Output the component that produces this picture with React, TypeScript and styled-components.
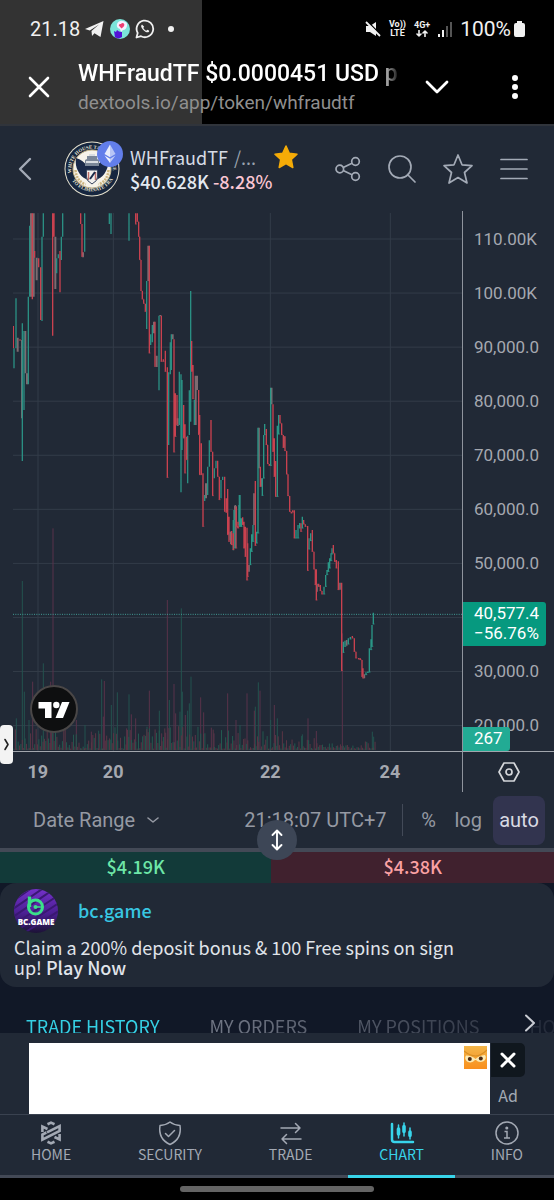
import React from "react";
import styled, { createGlobalStyle, css } from "styled-components";

const sans = `"Noto Sans CJK SC", "Noto Sans", sans-serif`;
const roboto = `Roboto, "Liberation Sans", sans-serif`;

const Global = createGlobalStyle`
  * { box-sizing: border-box; }
  body { margin: 0; background: #000; font-family: ${sans}; color: #d5d9e0; }
  button { border: 0; padding: 0; margin: 0; background: none; color: inherit; font: inherit; cursor: pointer; }
  a { color: inherit; text-decoration: none; }
  svg { display: block; flex: none; }
`;

const Page = styled.div`
  display: flex;
  flex-direction: column;
  min-height: 100vh;
  overflow: hidden;
`;

/* ---------- Phone status bar and in-app browser bar ---------- */

const BrowserTop = styled.header`
  background: linear-gradient(90deg, #333 0 36.5%, #000 36.5%);
  border-bottom: 2px solid #30343b;
  font-family: ${roboto};
  color: #fff;
`;

const StatusBar = styled.div`
  display: flex;
  align-items: center;
  justify-content: space-between;
  height: 58px;
  padding: 0 29px 0 30px;
  color: #f1f1f1;
  font-size: 20px;
`;

const StatusGroup = styled.div<{ $gap: number }>`
  display: flex;
  align-items: center;
  gap: ${(p) => p.$gap}px;
`;

const BatteryText = styled.span`
  font-size: 21px;
`;

const NetLabel = styled.span`
  display: flex;
  flex-direction: column;
  align-items: center;
  font-size: 9px;
  line-height: 9px;
  font-weight: 700;
`;

const AddressBar = styled.div`
  display: flex;
  align-items: center;
  height: 66px;
  padding: 0 26px 8px 28px;
`;

const AddressText = styled.div`
  flex: 1;
  min-width: 0;
  margin: 0 28px;
`;

const PageTitle = styled.div`
  overflow: hidden;
  white-space: nowrap;
  font-size: 23px;
  line-height: 30px;
  font-weight: 500;
  max-width: 320px;
  mask-image: linear-gradient(90deg, #000 302px, transparent 322px);
`;

const PageUrl = styled.div`
  font-size: 19px;
  line-height: 27px;
  color: #8f8f8f;
`;

const BarButtons = styled.div`
  display: flex;
  align-items: center;
  gap: 53px;
`;

/* ---------- Token header ---------- */

const TokenHeader = styled.section`
  display: flex;
  align-items: center;
  height: 85px;
  padding: 0 26px 0 15px;
  background: #212936;
`;

const BackButton = styled.button`
  color: #a3aab6;
`;

const TokenLogo = styled.div`
  position: relative;
  margin-left: 29px;
`;

const ChainBadge = styled.span`
  position: absolute;
  top: 0;
  right: -3px;
`;

const TokenInfo = styled.div`
  margin-left: 10px;
  flex: 1;
  white-space: nowrap;
`;

const TokenName = styled.div`
  display: flex;
  align-items: center;
  gap: 6px;
  font-size: 18px;
  line-height: 24px;
  color: #d5dbe5;
  span { color: #9aa2ae; }
`;

const FavStar = styled.span`
  margin-left: 12px;
`;

const TokenPrice = styled.div`
  font-size: 18px;
  line-height: 24px;
  font-weight: 500;
  color: #e4e9f1;
  span { color: #fbc6d3; }
`;

const HeaderIcons = styled.div`
  display: flex;
  align-items: center;
  gap: 27px;
  color: #a3aab6;
`;

/* ---------- Chart ---------- */

const ChartGrid = styled.section`
  position: relative;
  display: grid;
  grid-template-columns: 1fr 92px;
  background: #212936;
  font-family: ${roboto};
  color: #a5a8b0;
`;

const Plot = styled.div`
  position: relative;
  padding: 2px 0 0 13px;
  border-bottom: 1px solid #a2a6ad;
  svg.plot { width: 100%; height: 538px; }
`;

const TvLogo = styled.a`
  position: absolute;
  left: 30px;
  bottom: 18px;
`;

const Handle = styled.button`
  position: absolute;
  left: 0;
  top: 514px;
  display: grid;
  place-items: center;
  width: 13px;
  height: 39px;
  border-radius: 4px;
  background: #f3f3f3;
  color: #222;
`;

const PriceAxis = styled.div`
  position: relative;
  border-left: 1px solid #8f949d;
  border-bottom: 1px solid #a2a6ad;
`;

const PriceTick = styled.div`
  height: 54px;
  padding-left: 11px;
  font-size: 17px;
  line-height: 57px;
`;

const PriceTag = styled.div<{ $top: number; $width: number; $bg: string }>`
  position: absolute;
  left: 0;
  top: ${(p) => p.$top}px;
  width: ${(p) => p.$width}px;
  padding: 1px 0 3px 11px;
  border-radius: 0 3px 3px 0;
  background: ${(p) => p.$bg};
  color: #fff;
  font-size: 17px;
  line-height: 20px;
`;

const TimeAxis = styled.div`
  position: relative;
  height: 40px;
  font-size: 18px;
  line-height: 40px;
  font-weight: 700;
`;

const TimeTick = styled.span<{ $at: number }>`
  position: absolute;
  left: ${(p) => p.$at}%;
  transform: translateX(-50%);
`;

const AxisSettings = styled.button`
  display: grid;
  place-items: center;
  border-left: 1px solid #8f949d;
  color: #d4d6da;
`;

const ChartToolbar = styled.div`
  position: relative;
  display: flex;
  align-items: center;
  height: 56px;
  padding: 0 9px 0 33px;
  background: #212936;
  color: #9599a3;
  font-family: ${roboto};
  font-size: 20px;
  white-space: nowrap;
`;

const RangeButton = styled.button`
  display: flex;
  align-items: center;
  gap: 12px;
  margin-right: auto;
`;

const Clock = styled.span`
  padding-right: 15px;
  line-height: 32px;
  border-right: 1px solid #434a58;
`;

const ScaleButton = styled.button<{ $active?: boolean }>`
  min-width: 20px;
  margin-left: ${(p) => (p.$active ? 11 : 16)}px;
  ${(p) =>
    p.$active &&
    css`
      width: 52px;
      height: 49px;
      border-radius: 8px;
      background: #32344f;
      color: #d9dae3;
    `}
`;

const ResizeKnob = styled.button`
  position: absolute;
  left: 50%;
  bottom: -12px;
  z-index: 2;
  display: grid;
  place-items: center;
  width: 40px;
  height: 40px;
  margin-left: -20px;
  border-radius: 50%;
  background: #3d4656;
  color: #fff;
`;

/* ---------- Buy / sell volume ---------- */

const VolumeBar = styled.section`
  display: grid;
  grid-template-columns: 49fr 51fr;
  border-top: 4px solid #434956;
`;

const VolumeSide = styled.div<{ $buy?: boolean }>`
  padding-bottom: 2px;
  font-size: 18px;
  line-height: 29px;
  font-weight: 500;
  text-align: center;
  background: ${(p) => (p.$buy ? "#123a39" : "#40212e")};
  color: ${(p) => (p.$buy ? "#6ee7a8" : "#fba1a4")};
`;

/* ---------- Promo and tabs ---------- */

const Lower = styled.section`
  background: #111827;
`;

const Promo = styled.article`
  padding: 6px 80px 8px 14px;
  border-radius: 16px;
  background: #212936;
  font-size: 18px;
  line-height: 20px;
  color: #e0e4ea;
`;

const PromoHead = styled.div`
  display: flex;
  align-items: center;
  gap: 20px;
  height: 44px;
  margin-bottom: 4px;
  a { padding-bottom: 3px; color: #38c6e2; font-weight: 500; }
`;

const PromoText = styled.p`
  margin: 0;
  min-height: 42px;
  a { font-weight: 500; }
`;

const TabBar = styled.div`
  position: relative;
  height: 46px;
  overflow: hidden;
`;

const TabList = styled.div`
  display: flex;
  gap: 50px;
  padding: 27px 0 0 26px;
  mask-image: linear-gradient(90deg, #000 40%, rgba(0, 0, 0, 0.2) 100%);
`;

const Tab = styled.button<{ $active?: boolean }>`
  font-size: 18px;
  line-height: 24px;
  white-space: nowrap;
  color: ${(p) => (p.$active ? "#35d0e4" : "#6f7583")};
`;

const TabNext = styled.button`
  position: absolute;
  right: 18px;
  top: 27px;
  color: #c9ccd3;
`;

/* ---------- Ad ---------- */

const AdPanel = styled.aside`
  display: flex;
  gap: 1px;
  padding: 10px 29px 0;
  background: #212936;
`;

const AdBanner = styled.div`
  display: flex;
  justify-content: flex-end;
  flex: 1;
  height: 71px;
  padding: 3px;
  background: #fff;
`;

const AdSide = styled.div`
  width: 34px;
  text-align: center;
  font-size: 16px;
  line-height: 36px;
  color: #a3a9b4;
`;

const AdClose = styled.button`
  display: grid;
  place-items: center;
  width: 34px;
  height: 34px;
  border-radius: 0 5px 5px 0;
  background: #10171e;
  color: #fff;
`;

/* ---------- Bottom navigation ---------- */

const BottomNav = styled.nav`
  display: flex;
  justify-content: space-between;
  border-top: 1px solid #3a4250;
  background: linear-gradient(#212936 0 60px, #434956 60px);
`;

const NavItem = styled.a<{ $active?: boolean }>`
  display: flex;
  flex-direction: column;
  align-items: center;
  height: 63px;
  padding: 5px 31px 0;
  font-size: 14px;
  line-height: 16px;
  border-bottom: 3px solid ${(p) => (p.$active ? "#38d4ea" : "transparent")};
  color: ${(p) => (p.$active ? "#38d4ea" : "#a3a9b4")};
`;

const GestureArea = styled.footer`
  display: flex;
  justify-content: center;
  align-items: center;
  flex: 1;
  min-height: 21px;
  background: #000;
`;

const GesturePill = styled.span`
  width: 35%;
  height: 6px;
  border-radius: 3px;
  background: #646464;
`;

/* ---------- Chart data: [x, high, low], three units to a pixel ---------- */

type Bar = [number, number, number];

const upEarly: Bar[] = [
  [42, 430, 490], [48, 280, 430], [67, 355, 768], [72, 378, 615], [85, 275, 538], [89, 62, 275],
  [126, 95, 348], [130, 25, 95], [170, 160, 205], [175, 148, 160], [184, 95, 165], [188, 25, 95],
  [254, 25, 140], [328, 25, 57], [333, 25, 87], [387, 25, 107], [440, 228, 372], [452, 388, 420],
  [457, 360, 412], [477, 332, 556], [506, 502, 720], [511, 412, 508], [514, 388, 495], [538, 500, 660],
  [543, 508, 862], [546, 525, 735], [563, 692, 835], [568, 556, 690], [572, 258, 650], [583, 585, 660],
  [614, 870, 888], [623, 785, 870], [628, 706, 785], [643, 790, 820], [648, 767, 790], [663, 825, 880],
  [668, 815, 825], [700, 945, 1036], [718, 870, 965],
];
const downEarly: Bar[] = [
  [40, 363, 430], [60, 403, 407], [97, 25, 283], [104, 138, 158], [116, 160, 187], [122, 187, 345],
  [158, 25, 392], [162, 25, 95], [180, 138, 262], [242, 25, 57], [246, 57, 155], [407, 25, 58],
  [412, 25, 50], [416, 50, 95], [419, 95, 165], [423, 165, 258], [427, 258, 283], [431, 283, 296],
  [436, 296, 320], [448, 122, 445], [465, 350, 485], [484, 332, 470], [490, 463, 470], [496, 437, 500],
  [502, 487, 818], [522, 403, 742], [526, 565, 695], [531, 570, 660], [551, 600, 700], [555, 658, 805],
  [560, 695, 765], [575, 408, 500], [579, 480, 582], [596, 555, 690], [599, 630, 810], [604, 715, 810],
  [609, 805, 965], [633, 645, 740], [638, 740, 873], [653, 767, 815], [658, 815, 885], [674, 815, 920],
  [679, 880, 923], [683, 852, 990], [687, 935, 1010], [708, 903, 1030], [713, 963, 968],
];
const mixedEarly: Bar[] = [
  [53, 398, 440], [66, 405, 640], [76, 378, 505], [81, 505, 538], [93, 25, 275], [101, 25, 275],
  [110, 158, 226], [166, 95, 252], [249, 142, 157], [445, 122, 228], [462, 350, 385], [470, 452, 486],
  [481, 330, 334], [518, 388, 403], [533, 640, 663], [587, 512, 660], [591, 512, 555], [618, 835, 880],
  [693, 980, 1018], [705, 903, 945],
];
const upLate: Bar[] = [
  [12, 915, 1030], [27, 900, 960], [30, 870, 965], [34, 940, 965], [61, 1030, 1080], [65, 988, 1040],
  [69, 960, 1010], [80, 980, 1015], [84, 668, 985], [97, 820, 872], [101, 690, 820], [104, 657, 690],
  [122, 548, 782], [142, 662, 875], [146, 630, 688], [198, 975, 1000], [204, 960, 1000], [209, 954, 970],
  [217, 935, 970], [237, 1000, 1033], [242, 985, 1008], [282, 1145, 1168], [287, 1110, 1145],
  [291, 1095, 1110], [295, 1072, 1100], [299, 1060, 1090], [303, 1045, 1068], [306, 1030, 1048],
  [340, 1310, 1343], [345, 1307, 1325], [355, 1300, 1318], [361, 1296, 1303], [408, 1402, 1410],
  [413, 1400, 1403], [418, 1330, 1402], [423, 1303, 1335], [426, 1260, 1325], [430, 1223, 1258],
];
const downLate: Bar[] = [
  [5, 978, 1020], [10, 985, 1035], [19, 905, 965], [24, 950, 970], [38, 937, 960], [42, 950, 1030],
  [46, 965, 1055], [51, 968, 1126], [53, 1015, 1115], [76, 828, 1022], [91, 785, 845], [109, 672, 720],
  [113, 720, 777], [118, 777, 782], [129, 598, 740], [133, 700, 815], [137, 768, 875], [150, 630, 655],
  [155, 655, 690], [160, 690, 728], [165, 694, 738], [170, 738, 808], [174, 808, 873], [179, 873, 920],
  [184, 920, 925], [188, 916, 922], [193, 916, 1000], [213, 955, 980], [221, 945, 958], [226, 958, 965],
  [233, 963, 1097], [247, 975, 1040], [252, 1040, 1093], [256, 1093, 1140], [259, 1093, 1186],
  [266, 1136, 1145], [271, 1140, 1158], [276, 1158, 1168], [310, 1020, 1045], [314, 1045, 1070],
  [319, 1065, 1090], [325, 1069, 1155], [335, 1133, 1398], [367, 1293, 1300], [373, 1300, 1340],
  [378, 1340, 1360], [386, 1359, 1363], [391, 1360, 1365], [396, 1365, 1415], [399, 1390, 1420],
];
const mixedLate: Bar[] = [
  [1, 980, 1005], [16, 900, 1030], [57, 1080, 1100], [72, 865, 960], [87, 668, 790], [95, 820, 845],
  [125, 548, 598], [162, 694, 728], [261, 1136, 1160], [330, 1133, 1154], [350, 1305, 1322],
  [403, 1408, 1420],
];

/* Volume spikes: [x, height] */
const volUp: [number, number][] = [
  [67, 507], [130, 260], [73, 175], [305, 212], [334, 135], [352, 173], [387, 167], [441, 70], [478, 118],
  [508, 150], [540, 115], [544, 425], [547, 175], [573, 220], [568, 140], [563, 118], [49, 95], [255, 75],
  [87, 90], [296, 58], [720, 75], [766, 130], [775, 203], [812, 90], [832, 95], [907, 47], [1117, 55],
  [1121, 40],
];
const volDown: [number, number][] = [
  [159, 665], [502, 450], [98, 205], [313, 207], [310, 100], [394, 107], [407, 95], [380, 65], [448, 178],
  [522, 198], [527, 110], [556, 105], [602, 158], [611, 113], [683, 170], [708, 90], [634, 67], [229, 90],
  [152, 205], [741, 170], [763, 118], [780, 178], [823, 135], [924, 95], [949, 57], [1027, 350], [274, 55],
  [485, 50], [497, 52], [586, 45], [642, 50],
];

const smallVolume = Array.from({ length: 262 }, (_, i) => {
  const x = 42 + i * 4.15;
  const wave = Math.abs(Math.sin(i * 12.9898) * 43758.5453) % 1;
  const room = x < 700 ? 68 : x < 850 ? 55 : x < 960 ? 40 : 22;
  return { x, h: 4 + wave * wave * room, up: (i * 7) % 5 < 2 };
});

const barsToPath = (bars: Bar[]) => bars.map(([x, a, b]) => `M${x} ${a}V${b}`).join("");
const joinsToPath = (bars: Bar[]) => bars.map(([x, , b]) => `M${x - 2} ${b - 1}h6`).join("");
const volToPath = (v: [number, number][]) => v.map(([x, h]) => `M${x} 1635V${1635 - h}`).join("");

const ChartDrawing = () => (
  <svg className="plot" viewBox="39 24 1347 1614" preserveAspectRatio="none" fill="none" aria-label="Price chart">
    <g stroke="#333c49" strokeWidth="3">
      {Array.from({ length: 10 }, (_, i) => (
        <path key={i} d={`M39 ${102 + i * 162.2}H1386`} />
      ))}
      <path d="M114 24V1638M340 24V1638M811 24V1638M1171 24V1638" />
    </g>
    <g strokeWidth="3">
      <path d={volToPath(volUp)} stroke="#23524f" />
      <path d={volToPath(volDown)} stroke="#59324a" />
      {smallVolume.map((v, i) => (
        <path key={i} d={`M${v.x} 1635v${-v.h}`} stroke={v.up ? "#23584f" : "#5b3545"} />
      ))}
    </g>
    <path d="M39 1228H1386" stroke="#429a95" strokeWidth="3" strokeDasharray="3 4" />
    <g strokeWidth="4">
      <path d={barsToPath(mixedEarly)} stroke="#7d6b70" strokeWidth="6" />
      <path d={barsToPath(upEarly)} stroke="#2a8f83" />
      <path d={barsToPath(downEarly)} stroke="#c9414f" />
      <path d={joinsToPath(downEarly.slice(10))} stroke="#9c4350" strokeWidth="2" />
    </g>
    <g strokeWidth="4" transform="translate(690 0)">
      <path d={barsToPath(mixedLate)} stroke="#7d6b70" strokeWidth="5" />
      <path d={barsToPath(upLate)} stroke="#2a9686" />
      <path d={barsToPath(downLate)} stroke="#c9414f" />
      <path d={joinsToPath(downLate)} stroke="#b04350" strokeWidth="2" />
      <path d={joinsToPath(upLate)} stroke="#2a9686" strokeWidth="2" />
    </g>
  </svg>
);

/* ---------- Icons ---------- */

const Stroke = ({ w, h, sw = 2, d }: { w: number; h: number; sw?: number; d: string }) => (
  <svg width={w} height={h} viewBox={`0 0 ${w} ${h}`} fill="none" stroke="currentColor" strokeWidth={sw} strokeLinecap="round" strokeLinejoin="round">
    <path d={d} />
  </svg>
);

const Telegram = () => (
  <svg width="20" height="18" viewBox="0 0 20 18" fill="#f1f1f1">
    <path d="M0 9 18.500 1l-3 16-6-3.800-2.500 2.800-.5-5L14 4.500 4.800 10.500z" />
  </svg>
);

const ChatHead = () => (
  <svg width="20" height="20" viewBox="0 0 20 20">
    <circle cx="10" cy="10" r="10" fill="#7be5da" />
    <path d="M4 12l2 1 1-2 2 1.500 3 .5v5l-3 1.600-4-1z" fill="#5312d6" />
    <path d="M7 5q2-4 6-3 5 1 4 5-1 4-4 4l-2 2-1-3q-4-1-3-5z" fill="#f4f1ff" />
    <path d="M11.500 9.500 8.800 6.500q0-2 2-1.500 2-2 3.400 0 .8 2-2.700 4.500z" fill="#ee3f72" />
  </svg>
);

const WhatsApp = () => (
  <svg width="20" height="20" viewBox="0 0 20 20" fill="none">
    <path d="M1.500 18.500 2.700 14A8.300 8.300 0 1 1 6 17.200z" stroke="#f1f1f1" strokeWidth="1.800" strokeLinejoin="round" />
    <path d="M7 5.500c-1.500 1-1 3 1 5.200s4.500 3.300 5.700 2.300c1-1 .6-1.500-1.400-2.300l-1 1c-1.500-.5-2.500-1.500-3-2.900l.9-1z" fill="#f1f1f1" />
  </svg>
);

const Mute = () => (
  <svg width="16" height="17" viewBox="0 0 16 17">
    <path d="M1 5h4l6-4v14l-6-4H1z" fill="#f1f1f1" />
    <path d="M2 0l14 14" stroke="#000" strokeWidth="1.500" />
    <path d="M1 1l14 14" stroke="#f1f1f1" strokeWidth="1.800" />
  </svg>
);

const Signal = () => (
  <svg width="14" height="15" viewBox="0 0 14 15">
    <path d="M0 12h2v3H0zM4 8h2v7H4z" fill="#f1f1f1" />
    <path d="M8 4h2v11H8zM12 0h2v15h-2z" fill="#555" />
  </svg>
);

const Battery = () => (
  <svg width="11" height="17" viewBox="0 0 11 17" fill="#f1f1f1">
    <path d="M3 0h5v2h1q2 0 2 2v10q0 2-2 2H2q-2 0-2-2V4q0-2 2-2h1z" />
  </svg>
);

const Arrows = () => <Stroke w={12} h={7} sw={1.6} d="M3 0v6M1 4l2 2 2-2M9 6.500V1M7 3l2-2 2 2" />;

const Seal = () => (
  <svg width="56" height="56" viewBox="0 0 56 56">
    <defs>
      <path id="sealTop" d="M7.500 32A20.800 20.800 0 1 1 48.500 32" />
      <path id="sealBottom" d="M7 38A24 24 0 0 0 49 38" />
    </defs>
    <circle cx="28" cy="28" r="27.500" fill="#e9e4d0" />
    <circle cx="28" cy="28" r="26.500" fill="#16263f" />
    <circle cx="28" cy="28" r="19" fill="#f6f3ea" stroke="#c9b98c" />
    <g fill="#e8e3d2" fontFamily="Liberation Serif, serif" fontSize="5" fontWeight="700">
      <text><textPath href="#sealTop">WHITE HOUSE TASK FORCE</textPath></text>
      <text><textPath href="#sealBottom" startOffset="2">TO ELIMINATE FRAUD</textPath></text>
    </g>
    <path d="M11.500 29q1 11 10 14.500M44.500 29q-1 11-10 14.500" fill="none" stroke="#cdb682" strokeWidth="2.500" strokeDasharray="2 1" />
    <path d="M12 17q7 2 11 8h10q4-6 11-8 1 8-2 13-3 6-8 8l-6 5-6-5q-5-2-8-8-3-5-2-13z" fill="#1b2a49" />
    <path d="M23 15h10v3l2 1v6H21v-6l2-1z" fill="#7b8798" />
    <path d="M22 20h12v2H22zM25 13h6v2h-6z" fill="#d9dde2" />
    <path d="M22.500 29h11v7q0 4-5.500 7-5.500-3-5.500-7z" fill="#f3f1ee" stroke="#39465f" />
    <path d="M24.500 31v8M31.500 31v8" stroke="#b96d68" strokeWidth="1.500" />
    <path d="M26 38l5-7" stroke="#1b2a49" strokeWidth="2" />
  </svg>
);

const Ethereum = () => (
  <svg width="26" height="26" viewBox="0 0 26 26">
    <circle cx="13" cy="13" r="13" fill="#627eea" />
    <path d="M13 3.500 7.500 13 13 16.300z" fill="#fff" fillOpacity=".85" />
    <path d="M13 3.500 18.500 13 13 16.300z" fill="#fff" fillOpacity=".55" />
    <path d="M7.500 14.500 13 22v-4.300z" fill="#fff" fillOpacity=".9" />
    <path d="M18.500 14.500 13 22v-4.300z" fill="#fff" fillOpacity=".6" />
  </svg>
);

const GoldStar = () => (
  <svg width="24" height="24" viewBox="0 0 24 24" fill="#f5ab07" stroke="#f5ab07" strokeWidth="1.500" strokeLinejoin="round">
    <path d="M12 1 15.300 8.300 23 9.200 17.300 14.500 18.800 22.500 12 18.600 5.200 22.500 6.700 14.500 1 9.200 8.700 8.300z" />
  </svg>
);

const Share = () => (
  <svg width="26" height="26" viewBox="0 0 26 26" fill="none" stroke="currentColor" strokeWidth="1.700">
    <circle cx="4.800" cy="13" r="3.800" />
    <circle cx="20.500" cy="5.500" r="3.800" />
    <circle cx="20.500" cy="20.500" r="3.800" />
    <path d="M8.200 11.400 17 7.200M8.200 14.600 17 18.800" />
  </svg>
);

const TradingView = () => (
  <svg width="48" height="48" viewBox="0 0 48 48">
    <circle cx="24" cy="24" r="23" fill="#0e0f10" stroke="#4a4747" strokeWidth="2" />
    <path d="M8.500 17h13v16h-6.500v-9.500H8.500z" fill="#fff" />
    <circle cx="26.300" cy="20" r="3.200" fill="#fff" />
    <path d="M32 17h7.500L33 33h-7.500z" fill="#fff" />
  </svg>
);

const Gear = () => (
  <svg width="22" height="20" viewBox="0 0 22 20" fill="none" stroke="currentColor" strokeWidth="1.700" strokeLinejoin="round">
    <path d="M6 1h10l5 9-5 9H6l-5-9z" />
    <circle cx="11" cy="10" r="3" />
  </svg>
);

const BcGame = () => (
  <svg width="44" height="44" viewBox="0 0 44 44">
    <defs>
      <clipPath id="bcRound"><circle cx="22" cy="22" r="22" /></clipPath>
      <linearGradient id="bcFill" x1="0" y1="0" x2="0" y2="1">
        <stop offset="0" stopColor="#7431c9" />
        <stop offset=".55" stopColor="#4b1f92" />
        <stop offset="1" stopColor="#1c1236" />
      </linearGradient>
    </defs>
    <g clipPath="url(#bcRound)">
      <rect width="44" height="44" fill="url(#bcFill)" />
      <path d="M-4 14 22-4M-4 22 34-4M-4 30 46-4M-4 38 48 4M2 42 48 12M10 44 48 20" stroke="#3a1873" strokeWidth="2" />
      <path d="M15.500 7.500V18" stroke="#3be08a" strokeWidth="3.400" />
      <circle cx="21.500" cy="18" r="7" fill="none" stroke="#3be08a" strokeWidth="3" />
      <path d="M20 18h7" stroke="#3be08a" strokeWidth="1.500" />
      <circle cx="21.500" cy="18" r="2" fill="#3be08a" />
    </g>
    <text x="22" y="36" textAnchor="middle" fill="#fff" fontFamily="Open Sans, sans-serif" fontWeight="800" fontSize="8">BC.GAME</text>
  </svg>
);

const AdFace = () => (
  <svg width="23" height="23" viewBox="0 0 23 23">
    <defs>
      <linearGradient id="faceFill" x1="0" y1="0" x2="0" y2="1">
        <stop offset="0" stopColor="#f3b64a" />
        <stop offset="1" stopColor="#f98f1c" />
      </linearGradient>
    </defs>
    <rect width="23" height="23" fill="url(#faceFill)" />
    <path d="M2 9.500q6 0 9.500 3.500 3.500-3.500 9.500-4 2 3-1 6-5 2.500-8-1h-1q-3 4-8 1.500-3-3-1-6z" fill="#fbeab4" />
    <path d="M0 5q6 5 11.500 5T23 4" fill="none" stroke="#d98f24" strokeWidth="1.200" />
    <circle cx="5.800" cy="13" r="2" fill="#4a2a14" />
    <circle cx="16.800" cy="12.500" r="2" fill="#4a2a14" />
  </svg>
);

const HomeIcon = () => (
  <svg width="24" height="26" viewBox="0 0 24 26" fill="none" stroke="currentColor">
    <path d="M8.500 4.200 12 2.600l3.500 1.600M8.500 21.800 12 23.400l3.500-1.600" strokeWidth="2.600" />
    <path d="M3.400 12V6.500L8.500 9M20.600 14v5.500L15.500 17" strokeWidth="2.600" />
    <path d="M8 12.300 20.600 6v5L3.400 19.600v-5.100l4-2" strokeWidth="2.600" />
  </svg>
);

const ShieldIcon = () => (
  <svg width="26" height="26" viewBox="0 0 26 26" fill="none" stroke="currentColor" strokeWidth="1.500" strokeLinejoin="round" strokeLinecap="round">
    <path d="M13 2q4 3.200 10 3.500Q25 19 13 24.500 1 19 3 5.500 9 5.200 13 2z" />
    <path d="M8.500 13.500l3 3 6-6" />
  </svg>
);

const TradeIcon = () => <Stroke w={24} h={26} sw={1.5} d="M2 8h19M16.500 3.500 21 8l-4.500 4.500M22 19H3M7.500 14.500 3 19l4.500 4.500" />;

const ChartIcon = () => (
  <svg width="26" height="26" viewBox="0 0 26 26" fill="none" stroke="currentColor" strokeLinecap="round">
    <path d="M3 4v15.500q0 2.500 2.500 2.500H24" strokeWidth="2.500" />
    <path d="M9.500 5v13M15 3v13M21 8v11" strokeWidth="1.500" />
    <path d="M9.500 9v5M15 6.500v5M21 12v3.500" strokeWidth="3.600" />
  </svg>
);

const InfoIcon = () => (
  <svg width="26" height="26" viewBox="0 0 26 26" fill="none" stroke="currentColor" strokeWidth="1.500">
    <circle cx="13" cy="13" r="11" />
    <path d="M10.500 11.500H13V18M10 18h6" />
    <circle cx="12.800" cy="8" r=".8" fill="currentColor" />
  </svg>
);

/* ---------- Page ---------- */

const priceTicks = ["110.00K", "100.00K", "90,000.0", "80,000.0", "70,000.0", "60,000.0", "50,000.0", "", "30,000.0", "20,000.0"];
const timeTicks: [string, number][] = [["19", 8.2], ["20", 24.5], ["22", 58.5], ["24", 84.4]];
const tabs = ["TRADE HISTORY", "MY ORDERS", "MY POSITIONS", "HOLDERS"];
const navItems = [
  { label: "HOME", icon: <HomeIcon /> },
  { label: "SECURITY", icon: <ShieldIcon /> },
  { label: "TRADE", icon: <TradeIcon /> },
  { label: "CHART", icon: <ChartIcon /> },
  { label: "INFO", icon: <InfoIcon /> },
];

export default function App() {
  return (
    <Page>
      <Global />
      <BrowserTop>
        <StatusBar>
          <StatusGroup $gap={5}>
            <span>21.18</span>
            <Telegram />
            <ChatHead />
            <WhatsApp />
            <Stroke w={20} h={8} sw={6} d="M11 4h0" />
          </StatusGroup>
          <StatusGroup $gap={8}>
            <Mute />
            <NetLabel><span>Vo))</span><span>LTE</span></NetLabel>
            <NetLabel><span>4G+</span><Arrows /></NetLabel>
            <Signal />
            <StatusGroup $gap={3}>
              <BatteryText>100%</BatteryText>
              <Battery />
            </StatusGroup>
          </StatusGroup>
        </StatusBar>
        <AddressBar>
          <button aria-label="Close"><Stroke w={22} h={22} sw={2.6} d="M2 2l18 18M20 2 2 20" /></button>
          <AddressText>
            <PageTitle>WHFraudTF $0.0000451 USD price</PageTitle>
            <PageUrl>dextools.io/app/token/whfraudtf</PageUrl>
          </AddressText>
          <BarButtons>
            <button aria-label="Minimise"><Stroke w={24} h={14} sw={2.8} d="M2 2l10 10L22 2" /></button>
            <button aria-label="More"><Stroke w={26} h={26} sw={6} d="M13 4h0M13 13h0M13 22h0" /></button>
          </BarButtons>
        </AddressBar>
      </BrowserTop>

      <TokenHeader>
        <BackButton aria-label="Back"><Stroke w={20} h={24} sw={2.4} d="M15 2 5 12l10 10" /></BackButton>
        <TokenLogo>
          <Seal />
          <ChainBadge><Ethereum /></ChainBadge>
        </TokenLogo>
        <TokenInfo>
          <TokenName>WHFraudTF <span>/...</span><FavStar><GoldStar /></FavStar></TokenName>
          <TokenPrice>$40.628K <span>-8.28%</span></TokenPrice>
        </TokenInfo>
        <HeaderIcons>
          <button aria-label="Share"><Share /></button>
          <button aria-label="Search"><Stroke w={28} h={28} sw={1.7} d="M19.500 19.500 27 27M23 12A11 11 0 1 1 1 12a11 11 0 0 1 22 0" /></button>
          <button aria-label="Favourite"><Stroke w={30} h={30} sw={1.7} d="M15 1 19 10.800 29 11.700 21.500 18.500 24 29 15 23.500 6 29 8.500 18.500 1 11.700 11 10.800z" /></button>
          <button aria-label="Menu"><Stroke w={28} h={24} sw={1.7} d="M1 2.500h26M1 12h26M1 21.500h26" /></button>
        </HeaderIcons>
      </TokenHeader>

      <ChartGrid>
        <Plot>
          <ChartDrawing />
          <TvLogo href="#tradingview" aria-label="TradingView"><TradingView /></TvLogo>
          <Handle aria-label="Open drawing tools"><Stroke w={7} h={13} sw={1.6} d="M2 1.500l3 5-3 5" /></Handle>
        </Plot>
        <PriceAxis>
          {priceTicks.map((t, i) => <PriceTick key={i}>{t}</PriceTick>)}
          <PriceTag $top={391} $width={83} $bg="#06997f">40,577.4<br />−56.76%</PriceTag>
          <PriceTag $top={516} $width={47} $bg="#22ab94">267</PriceTag>
        </PriceAxis>
        <TimeAxis>
          {timeTicks.map(([t, at]) => <TimeTick key={t} $at={at}>{t}</TimeTick>)}
        </TimeAxis>
        <AxisSettings aria-label="Chart settings"><Gear /></AxisSettings>
      </ChartGrid>

      <ChartToolbar>
        <RangeButton>Date Range <Stroke w={12} h={8} sw={1.6} d="M1 2l5 4 5-4" /></RangeButton>
        <Clock>21:18:07 UTC+7</Clock>
        <ScaleButton>%</ScaleButton>
        <ScaleButton>log</ScaleButton>
        <ScaleButton $active>auto</ScaleButton>
        <ResizeKnob aria-label="Resize chart"><Stroke w={14} h={22} sw={1.9} d="M7 2v18M2.500 6 7 1.500 11.500 6M2.500 16 7 20.500 11.500 16" /></ResizeKnob>
      </ChartToolbar>

      <VolumeBar>
        <VolumeSide $buy>$4.19K</VolumeSide>
        <VolumeSide>$4.38K</VolumeSide>
      </VolumeBar>

      <Lower>
        <Promo>
          <PromoHead><BcGame /><a href="#bc">bc.game</a></PromoHead>
          <PromoText>Claim a 200% deposit bonus &amp; 100 Free spins on sign up! <a href="#play">Play Now</a></PromoText>
        </Promo>
        <TabBar>
          <TabList>
            {tabs.map((t, i) => <Tab key={t} $active={i === 0}>{t}</Tab>)}
          </TabList>
          <TabNext aria-label="More tabs"><Stroke w={12} h={18} sw={2} d="M2 1.500l8 7.500-8 7.500" /></TabNext>
        </TabBar>
      </Lower>

      <AdPanel>
        <AdBanner><AdFace /></AdBanner>
        <AdSide>
          <AdClose aria-label="Close ad"><Stroke w={16} h={16} sw={3} d="M2 2l12 12M14 2 2 14" /></AdClose>
          Ad
        </AdSide>
      </AdPanel>

      <BottomNav>
        {navItems.map((n) => (
          <NavItem key={n.label} href={`#${n.label.toLowerCase()}`} $active={n.label === "CHART"}>
            {n.icon}
            {n.label}
          </NavItem>
        ))}
      </BottomNav>
      <GestureArea><GesturePill /></GestureArea>
    </Page>
  );
}
